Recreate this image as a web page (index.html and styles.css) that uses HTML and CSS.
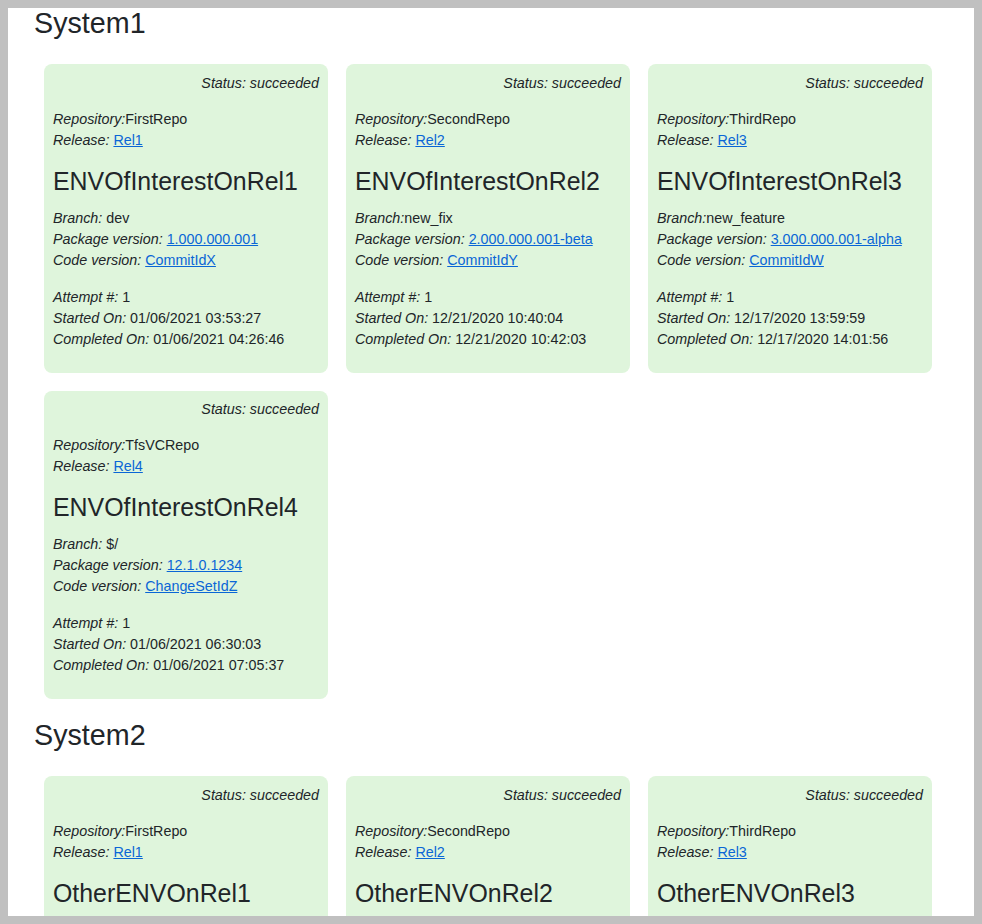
FILE: index.html
```html
<!DOCTYPE html>
<html>
<head>
<meta charset="utf-8">
<link rel="stylesheet" href="styles.css">
</head>
<body>
<div class="frame">
  <div class="page">
    <section class="system">
      <h2 class="system-title">System1</h2>
      <div class="cards">
        <div class="card">
          <div class="status"><i>Status: succeeded</i></div>
          <div class="block">
            <div><i>Repository:</i>FirstRepo</div>
            <div><i>Release:</i> <a href="#">Rel1</a></div>
          </div>
          <h4 class="env">ENVOfInterestOnRel1</h4>
          <div class="block">
            <div><i>Branch:</i> dev</div>
            <div><i>Package version:</i> <a href="#">1.000.000.001</a></div>
            <div><i>Code version:</i> <a href="#">CommitIdX</a></div>
          </div>
          <div class="block attempt">
            <div><i>Attempt #:</i> 1</div>
            <div><i>Started On:</i> 01/06/2021 03:53:27</div>
            <div><i>Completed On:</i> 01/06/2021 04:26:46</div>
          </div>
        </div>
        <div class="card">
          <div class="status"><i>Status: succeeded</i></div>
          <div class="block">
            <div><i>Repository:</i>SecondRepo</div>
            <div><i>Release:</i> <a href="#">Rel2</a></div>
          </div>
          <h4 class="env">ENVOfInterestOnRel2</h4>
          <div class="block">
            <div><i>Branch:</i>new_fix</div>
            <div><i>Package version:</i> <a href="#">2.000.000.001-beta</a></div>
            <div><i>Code version:</i> <a href="#">CommitIdY</a></div>
          </div>
          <div class="block attempt">
            <div><i>Attempt #:</i> 1</div>
            <div><i>Started On:</i> 12/21/2020 10:40:04</div>
            <div><i>Completed On:</i> 12/21/2020 10:42:03</div>
          </div>
        </div>
        <div class="card">
          <div class="status"><i>Status: succeeded</i></div>
          <div class="block">
            <div><i>Repository:</i>ThirdRepo</div>
            <div><i>Release:</i> <a href="#">Rel3</a></div>
          </div>
          <h4 class="env">ENVOfInterestOnRel3</h4>
          <div class="block">
            <div><i>Branch:</i>new_feature</div>
            <div><i>Package version:</i> <a href="#">3.000.000.001-alpha</a></div>
            <div><i>Code version:</i> <a href="#">CommitIdW</a></div>
          </div>
          <div class="block attempt">
            <div><i>Attempt #:</i> 1</div>
            <div><i>Started On:</i> 12/17/2020 13:59:59</div>
            <div><i>Completed On:</i> 12/17/2020 14:01:56</div>
          </div>
        </div>
        <div class="card">
          <div class="status"><i>Status: succeeded</i></div>
          <div class="block">
            <div><i>Repository:</i>TfsVCRepo</div>
            <div><i>Release:</i> <a href="#">Rel4</a></div>
          </div>
          <h4 class="env">ENVOfInterestOnRel4</h4>
          <div class="block">
            <div><i>Branch:</i> $/</div>
            <div><i>Package version:</i> <a href="#">12.1.0.1234</a></div>
            <div><i>Code version:</i> <a href="#">ChangeSetIdZ</a></div>
          </div>
          <div class="block attempt">
            <div><i>Attempt #:</i> 1</div>
            <div><i>Started On:</i> 01/06/2021 06:30:03</div>
            <div><i>Completed On:</i> 01/06/2021 07:05:37</div>
          </div>
        </div>
      </div>
    </section>
    <section class="system">
      <h2 class="system-title">System2</h2>
      <div class="cards">
        <div class="card">
          <div class="status"><i>Status: succeeded</i></div>
          <div class="block">
            <div><i>Repository:</i>FirstRepo</div>
            <div><i>Release:</i> <a href="#">Rel1</a></div>
          </div>
          <h4 class="env">OtherENVOnRel1</h4>
        </div>
        <div class="card">
          <div class="status"><i>Status: succeeded</i></div>
          <div class="block">
            <div><i>Repository:</i>SecondRepo</div>
            <div><i>Release:</i> <a href="#">Rel2</a></div>
          </div>
          <h4 class="env">OtherENVOnRel2</h4>
        </div>
        <div class="card">
          <div class="status"><i>Status: succeeded</i></div>
          <div class="block">
            <div><i>Repository:</i>ThirdRepo</div>
            <div><i>Release:</i> <a href="#">Rel3</a></div>
          </div>
          <h4 class="env">OtherENVOnRel3</h4>
        </div>
      </div>
    </section>
  </div>
</div>
</body>
</html>
```

FILE: styles.css
```css
html, body {
  margin: 0;
  padding: 0;
  background: #c0c0c0;
}
body {
  font-family: "Liberation Sans", Arial, sans-serif;
  font-size: 14.3px;
  line-height: 21px;
  color: #212529;
}
.frame {
  padding: 8px;
  height: 924px;
  box-sizing: border-box;
}
.page {
  background: #ffffff;
  height: 908px;
  overflow: hidden;
  padding: 0 0 0 26px;
}
.system-title {
  margin: 0;
  font-size: 28.7px;
  font-weight: normal;
  line-height: 30px;
}
.system + .system .system-title {
  margin-top: 21px;
}
.cards {
  display: grid;
  grid-template-columns: repeat(3, 284px);
  column-gap: 18px;
  row-gap: 18px;
  margin: 26px 0 0 10px;
}
.card {
  background: #dff5dc;
  border-radius: 8px;
  padding: 8px 9px 23px 9px;
}
.status {
  text-align: right;
  padding-top: 0.5px;
}
.block {
  margin-top: 15px;
}
.env {
  margin: 15px 0 12px 0;
  font-size: 24.9px;
  font-weight: normal;
  line-height: 30px;
}
.env + .block {
  margin-top: 0;
}
.attempt {
  margin-top: 16px;
}
a {
  color: #0a66d6;
  text-decoration: underline;
}
```
